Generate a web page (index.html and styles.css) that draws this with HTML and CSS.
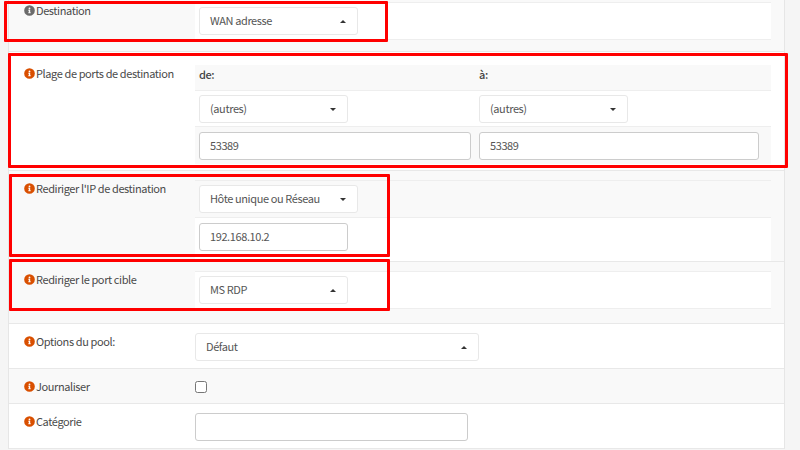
FILE: index.html
```html
<!DOCTYPE html>
<html lang="fr">
<head>
<meta charset="utf-8">
<title>Redirection de port</title>
<link rel="stylesheet" href="styles.css">
</head>
<body>
<main class="panel">
  <section class="row row-gray row-dest">
    <div class="label"><svg class="info info-grey" viewBox="0 0 512 512"><use href="#i"/></svg>Destination</div>
    <div class="field">
      <div class="inner inner-white"><div class="select w-159 up">WAN adresse</div></div>
    </div>
  </section>
  <section class="row row-white row-ports">
    <div class="label"><svg class="info" viewBox="0 0 512 512"><use href="#i"/></svg>Plage de ports de destination</div>
    <div class="field">
      <div class="cols head"><b>de:</b><b>à:</b></div>
      <div class="cols sel"><div class="select w-149">(autres)</div><div class="select w-149">(autres)</div></div>
      <div class="cols inp"><div class="input">53389</div><div class="input">53389</div></div>
    </div>
  </section>
  <section class="row row-gray row-ip">
    <div class="label"><svg class="info" viewBox="0 0 512 512"><use href="#i"/></svg>Rediriger l'IP de destination</div>
    <div class="field">
      <div class="inner"><div class="select w-159">Hôte unique ou Réseau</div></div>
      <div class="inner-plain"><div class="input w-149">192.168.10.2</div></div>
    </div>
  </section>
  <section class="row row-gray row-port">
    <div class="label"><svg class="info" viewBox="0 0 512 512"><use href="#i"/></svg>Rediriger le port cible</div>
    <div class="field">
      <div class="inner inner-white"><div class="select w-149 up">MS RDP</div></div>
    </div>
  </section>
  <section class="row row-white row-pool">
    <div class="label"><svg class="info" viewBox="0 0 512 512"><use href="#i"/></svg>Options du pool:</div>
    <div class="cell"><div class="select w-284 up">Défaut</div></div>
  </section>
  <section class="row row-gray row-log">
    <div class="label"><svg class="info" viewBox="0 0 512 512"><use href="#i"/></svg>Journaliser</div>
    <div class="cell"><span class="check"></span></div>
  </section>
  <section class="row row-white row-cat">
    <div class="label"><svg class="info" viewBox="0 0 512 512"><use href="#i"/></svg>Catégorie</div>
    <div class="cell"><div class="input w-273"></div></div>
  </section>
</main>
<div class="mark m1"></div>
<div class="mark m2"></div>
<div class="mark m3"></div>
<div class="mark m4"></div>
<svg class="defs" width="0" height="0"><defs><path id="i" d="M256 8a248 248 0 1 0 0 496 248 248 0 0 0 0-496zm0 110a42 42 0 1 1 0 84 42 42 0 0 1 0-84zm56 254c0 7-5 12-12 12h-88c-7 0-12-5-12-12v-24c0-7 5-12 12-12h12v-64h-12c-7 0-12-5-12-12v-24c0-7 5-12 12-12h64c7 0 12 5 12 12v100h12c7 0 12 5 12 12z"/></defs></svg>
</body>
</html>
```

FILE: styles.css
```css
html, body { margin: 0; height: 450px; overflow: hidden; }
body { background: #f5f5f5; font: 11px/16px "Noto Sans CJK SC", sans-serif; letter-spacing: -0.4px; color: #444; position: relative; }
.defs { position: absolute; }
.panel { margin-left: 8px; width: 775px; background: #fff; margin-top: -11px; border-right: 1px solid #e6e6e6; border-left: 1px solid #e6e6e6; }
.row { display: flex; border-bottom: 1px solid #e8e8e8; box-sizing: border-box; }
.row-gray { background: #f9f9f9; }
.row-white { background: #fff; }
.label { width: 186px; flex: none; box-sizing: border-box; padding-left: 15px; color: #4a4a4a; display: flex; align-items: flex-start; gap: 1px; }
.info { width: 11px; height: 11px; fill: #d94f00; margin-top: 3px; flex: none; }
.info-grey { fill: #6b6b6b; }
.field { width: 576px; flex: none; }
.inner { height: 38px; padding-left: 4px; box-sizing: border-box; display: flex; align-items: center; border-top: 1px solid #eee; border-bottom: 1px solid #eee; }
.inner-white { background: #fff; }
.inner-plain { padding: 5px 0 0 4px; background: #fff; height: 43px; box-sizing: border-box; }
.cols { display: grid; grid-template-columns: 280px 296px; box-sizing: border-box; border-bottom: 1px solid #eee; align-items: center; }
.head { height: 26px; background: #f9f9f9; align-items: start; }
.head b { font-weight: 500; padding: 1px 0 0 4px; }
.sel { height: 36px; background: #fff; }
.sel .select { margin-left: 4px; }
.inp { height: 37px; background: #f9f9f9; border-bottom: 0; }
.inp .input { margin-left: 4px; width: 272px; }
.inp .input + .input { width: 280px; }
.select, .input { height: 28px; box-sizing: border-box; background: #fff; border-radius: 3px; display: flex; align-items: center; padding: 0 0 2px 10px; color: #555; position: relative; }
.select { border: 1px solid #e8e8e8; }
.input { border: 1px solid #ccc; }
.select::after { content: ""; position: absolute; right: 11px; top: 12px; border-style: solid; border-color: #333 transparent transparent; border-width: 3px 3.5px 0; }
.select.up::after { border-color: transparent transparent #333; border-width: 0 3.5px 3px; }
.w-159 { width: 159px; }
.w-149 { width: 149px; }
.w-284 { width: 284px; }
.w-273 { width: 273px; }
.check { display: block; width: 10px; height: 10px; border: 1px solid #767676; border-radius: 2.5px; background: #fff; margin-top: 12px; }
.row-dest { height: 63px; padding-top: 13px; }
.row-ports { height: 119px; padding-top: 13px; }
.row-ip { height: 91px; padding-top: 9px; }
.row-port { height: 62px; padding-top: 9px; }
.row-pool { height: 45px; padding-top: 9px; }
.row-log { height: 35px; }
.row-log .label { padding-top: 9px; }
.row-cat { height: 45px; padding-top: 9px; }
.mark { position: absolute; border: 3px solid #f00; box-sizing: border-box; border-radius: 1px; }
.m1 { left: 4px; top: 1px; width: 384px; height: 41px; }
.m2 { left: 8px; top: 53px; width: 780px; height: 115px; }
.m3 { left: 9px; top: 174px; width: 381px; height: 83px; }
.m4 { left: 9px; top: 259px; width: 381px; height: 52px; }
```
